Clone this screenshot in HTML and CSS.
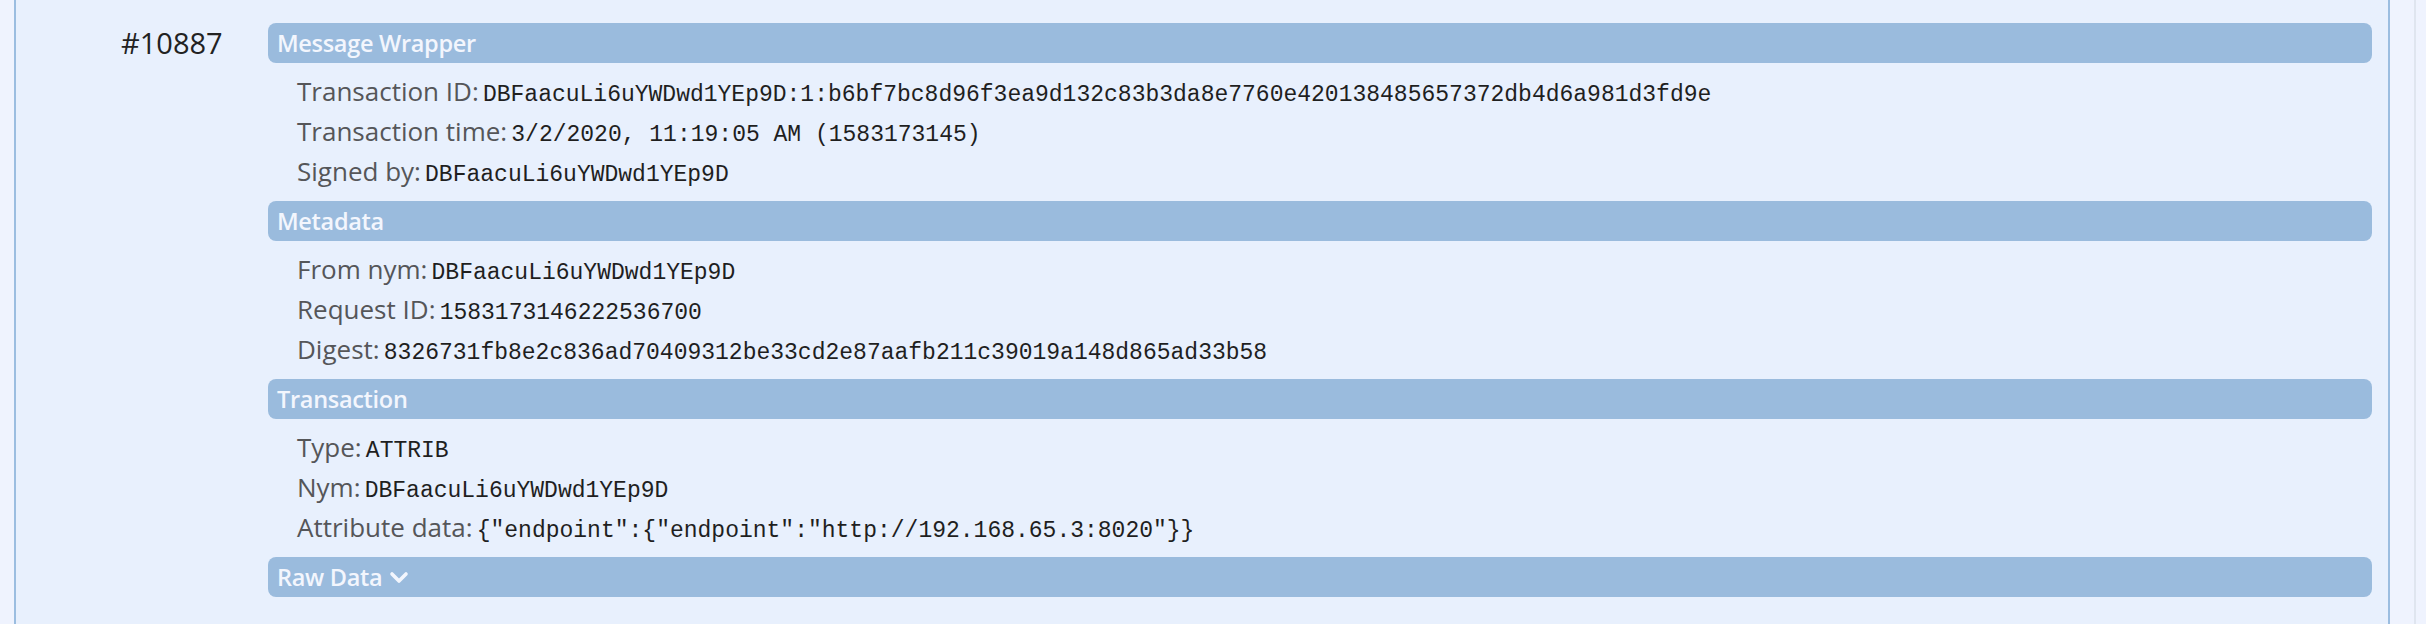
FILE: index.html
```html
<!DOCTYPE html>
<html lang="en">
<head>
<meta charset="utf-8">
<title>Transaction #10887</title>
<link rel="stylesheet" href="styles.css">
</head>
<body>
<div class="page">
  <div class="edge"></div>
  <main class="panel">
    <div class="txn">
      <div class="txn-num">#10887</div>
      <div class="sections">
        <section class="section">
          <div class="bar">Message Wrapper</div>
          <div class="rows">
            <div class="row"><span class="label">Transaction ID:</span> <code class="val">DBFaacuLi6uYWDwd1YEp9D:1:b6bf7bc8d96f3ea9d132c83b3da8e7760e420138485657372db4d6a981d3fd9e</code></div>
            <div class="row"><span class="label">Transaction time:</span> <code class="val">3/2/2020, 11:19:05 AM (1583173145)</code></div>
            <div class="row"><span class="label">Signed by:</span> <code class="val">DBFaacuLi6uYWDwd1YEp9D</code></div>
          </div>
        </section>
        <section class="section">
          <div class="bar">Metadata</div>
          <div class="rows">
            <div class="row"><span class="label">From nym:</span> <code class="val">DBFaacuLi6uYWDwd1YEp9D</code></div>
            <div class="row"><span class="label">Request ID:</span> <code class="val">1583173146222536700</code></div>
            <div class="row"><span class="label">Digest:</span> <code class="val">8326731fb8e2c836ad70409312be33cd2e87aafb211c39019a148d865ad33b58</code></div>
          </div>
        </section>
        <section class="section">
          <div class="bar">Transaction</div>
          <div class="rows">
            <div class="row"><span class="label">Type:</span> <code class="val">ATTRIB</code></div>
            <div class="row"><span class="label">Nym:</span> <code class="val">DBFaacuLi6uYWDwd1YEp9D</code></div>
            <div class="row"><span class="label">Attribute data:</span> <code class="val">{"endpoint":{"endpoint":"http://192.168.65.3:8020"}}</code></div>
          </div>
        </section>
        <section class="section">
          <div class="bar bar-toggle">Raw Data
            <svg class="chev" width="20" height="14" viewBox="0 0 20 14" aria-hidden="true"><path d="M3 3 L10 10 L17 3" fill="none" stroke="currentColor" stroke-width="3.6" stroke-linecap="round" stroke-linejoin="round"/></svg>
          </div>
        </section>
      </div>
    </div>
  </main>
  <div class="track"></div>
</div>
</body>
</html>
```

FILE: styles.css
```css
html, body {
  margin: 0;
  padding: 0;
  height: 100%;
  overflow: hidden;
}

body {
  background: #eff3fe;
  font-family: "Open Sans", "Noto Sans", sans-serif;
}

.page {
  display: flex;
  height: 624px;
}

.edge {
  width: 14px;
  flex: none;
}

.panel {
  width: 2376px;
  flex: none;
  background: #e8f0fd;
  border-left: 2px solid #9bbde0;
  border-right: 2px solid #9bbde0;
  padding-top: 23px;
  box-sizing: border-box;
}

.track {
  width: 24px;
  flex: none;
  border-right: 2px solid #dfe5ef;
  background: #eff3fe;
}

.txn {
  display: flex;
}

.txn-num {
  width: 252px;
  flex: none;
  box-sizing: border-box;
  padding-left: 105px;
  font-size: 29px;
  line-height: 40px;
  color: #222;
}

.sections {
  flex: 1;
  margin-right: 16px;
}

.section {
  margin-bottom: 10px;
}

.bar {
  height: 40px;
  line-height: 40px;
  background: #9abbdd;
  border-radius: 8px;
  padding-left: 9px;
  color: #f3f6fd;
  font-size: 23.5px;
  font-weight: 600;
  letter-spacing: -0.3px;
}

.bar-toggle {
  display: flex;
  align-items: center;
  gap: 7px;
}

.chev {
  display: block;
  margin-top: 2px;
}

.rows {
  padding: 8px 0 0 29px;
}

.row {
  height: 40px;
  line-height: 40px;
  white-space: nowrap;
}

.label {
  font-size: 26px;
  color: #555659;
}

.val {
  font-family: "Liberation Mono", "Courier New", monospace;
  font-size: 23px;
  color: #1f1f1f;
}
```
